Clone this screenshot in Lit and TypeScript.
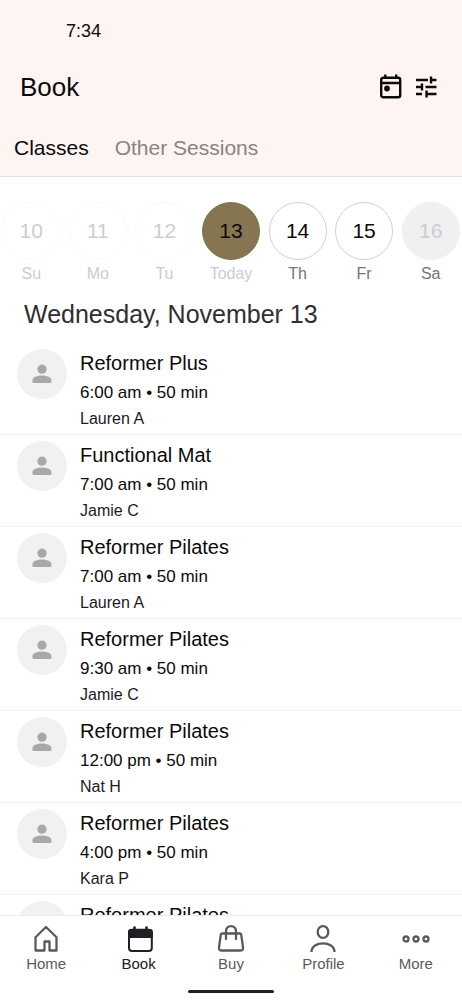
import { LitElement, html, css, svg, nothing } from "lit";
import { customElement, state } from "lit/decorators.js";
import { classMap } from "lit/directives/class-map.js";

interface Day {
  date: number;
  label: string;
  kind: "past" | "today" | "open" | "closed";
}

interface Session {
  name: string;
  time?: string;
  teacher?: string;
}

const DAYS: Day[] = [
  { date: 10, label: "Su", kind: "past" },
  { date: 11, label: "Mo", kind: "past" },
  { date: 12, label: "Tu", kind: "past" },
  { date: 13, label: "Today", kind: "today" },
  { date: 14, label: "Th", kind: "open" },
  { date: 15, label: "Fr", kind: "open" },
  { date: 16, label: "Sa", kind: "closed" },
];

const SESSIONS: Session[] = [
  { name: "Reformer Plus", time: "6:00 am • 50 min", teacher: "Lauren A" },
  { name: "Functional Mat", time: "7:00 am • 50 min", teacher: "Jamie C" },
  { name: "Reformer Pilates", time: "7:00 am • 50 min", teacher: "Lauren A" },
  { name: "Reformer Pilates", time: "9:30 am • 50 min", teacher: "Jamie C" },
  { name: "Reformer Pilates", time: "12:00 pm • 50 min", teacher: "Nat H" },
  { name: "Reformer Pilates", time: "4:00 pm • 50 min", teacher: "Kara P" },
  { name: "Reformer Pilates" },
];

const NAV = [
  {
    label: "Home",
    icon: svg`<path d="M4.500 13.200 15 3l10.500 10.200V26.500h-7V17.500h-5v9h-9z" fill="none" stroke="currentColor" stroke-width="2.300" stroke-linejoin="round"/>`,
  },
  {
    label: "Book",
    icon: svg`<rect x="5" y="5.800" width="22.800" height="21.200" rx="3" fill="none" stroke="currentColor" stroke-width="2"/><path d="M4 14V8a3 3 0 0 1 3-3h18.800a3 3 0 0 1 3 3v6z" fill="currentColor"/><path d="M10.500 2.500V7M22.500 2.500V7" stroke="currentColor" stroke-width="2.600"/>`,
  },
  {
    label: "Buy",
    icon: svg`<path d="M6.200 9.500h17.600q1.200 0 1.400 1.200l1.800 12.600q.4 3.200-2.700 3.200H5.700q-3.100 0-2.700-3.200l1.800-12.600q.2-1.200 1.400-1.200zM10 15V7.500C10 .3 20 .3 20 7.500V15" fill="none" stroke="currentColor" stroke-width="2.300" stroke-linecap="round"/>`,
  },
  {
    label: "Profile",
    icon: svg`<ellipse cx="15" cy="8" rx="5.300" ry="5.900" fill="none" stroke="currentColor" stroke-width="2.300"/><path d="M3.500 28c0-11.500 23-11.500 23 0" fill="none" stroke="currentColor" stroke-width="2.300"/>`,
  },
  {
    label: "More",
    icon: svg`<g fill="none" stroke="currentColor" stroke-width="2.300"><circle cx="5" cy="15" r="2.500"/><circle cx="15" cy="15" r="2.500"/><circle cx="25" cy="15" r="2.500"/></g>`,
  },
];

@customElement("app-root")
export class AppRoot extends LitElement {
  @state() private tab = "Classes";

  static styles = css`
    :host {
      display: flex;
      flex-direction: column;
      height: 100vh;
      overflow: hidden;
      background: #fff;
      color: #0c0a0b;
      font-family: "Liberation Sans", Arial, sans-serif;
    }
    * {
      box-sizing: border-box;
    }
    button {
      padding: 0;
      border: 0;
      background: none;
      color: inherit;
      font: inherit;
      cursor: pointer;
    }
    h1,
    h2,
    h3,
    p,
    ul {
      margin: 0;
      padding: 0;
      font-weight: 400;
    }
    ul {
      list-style: none;
    }
    svg {
      display: block;
    }
    .header {
      flex: none;
      background: #fef4f2;
      border-bottom: 1px solid #e5dfde;
    }
    .status {
      padding: 20px 66px 0;
      font-size: 18px;
      line-height: 22px;
    }
    .title-bar {
      display: flex;
      align-items: center;
      justify-content: space-between;
      padding: 29px 22px 0 20px;
    }
    .title {
      font-size: 26px;
      line-height: 32px;
    }
    .actions {
      display: flex;
      gap: 8px;
    }
    .tabs {
      display: flex;
      gap: 26px;
      padding: 32px 14px 15px;
      font-size: 21px;
      line-height: 26px;
    }
    .tab {
      color: #8a8382;
    }
    .tab.active {
      color: #0c0a0b;
    }
    .days {
      flex: none;
      display: grid;
      grid-template-columns: repeat(7, 1fr);
      margin: 25px -2px 0;
    }
    .day {
      display: flex;
      flex-direction: column;
      align-items: center;
      gap: 4px;
      color: #77717a;
      font-size: 16px;
      line-height: 20px;
    }
    .circle {
      width: 58px;
      height: 58px;
      border: 1px solid #d2d0d4;
      border-radius: 50%;
      color: #0c0a0b;
      font-size: 21px;
      line-height: 56px;
      text-align: center;
    }
    .past,
    .today {
      color: #cfcbd2;
    }
    .past .circle {
      border-color: #fafafa;
      color: #cfcbd2;
    }
    .today .circle {
      border-color: #867551;
      background: #867551;
    }
    .closed .circle {
      border-color: #f1eff2;
      background: #f1eff2;
      color: #cfcbd2;
    }
    .date {
      flex: none;
      padding: 14px 24px 13px;
      color: #302e31;
      font-size: 25px;
      line-height: 32px;
    }
    .sessions {
      flex: 1;
      min-height: 0;
      overflow: hidden;
    }
    .session {
      display: flex;
      gap: 13px;
      height: 92px;
      padding: 6px 17px 0;
      border-bottom: 1px solid #efeef0;
    }
    .avatar {
      flex: none;
      display: grid;
      place-items: center;
      width: 50px;
      height: 50px;
      border-radius: 50%;
      background: #f2f0f3;
      color: #a9a7aa;
    }
    .name {
      font-size: 20px;
      line-height: 28px;
    }
    .time {
      padding-top: 4px;
      font-size: 17px;
      line-height: 24px;
    }
    .teacher {
      padding-top: 2px;
      font-size: 16px;
      line-height: 24px;
      color: #1c1b1d;
    }
    .nav {
      flex: none;
      display: grid;
      grid-template-columns: repeat(5, 1fr);
      border-top: 1px solid #ececee;
      padding-top: 8px;
      background: #fff;
    }
    .link {
      display: flex;
      flex-direction: column;
      align-items: center;
      color: #5a5a5c;
      font-size: 15px;
      line-height: 20px;
      text-decoration: none;
    }
    .link.current {
      color: #202024;
    }
    .home-bar {
      flex: none;
      align-self: center;
      width: 86px;
      height: 3px;
      margin: 16px 0 7px;
      border-radius: 2px;
      background: #202024;
    }
  `;

  private renderTab(name: string) {
    const active = this.tab === name;
    return html`<button
      class=${classMap({ tab: true, active })}
      role="tab"
      aria-selected=${active}
      @click=${() => (this.tab = name)}
    >${name}</button>`;
  }

  render() {
    return html`
      <header class="header">
        <div class="status">7:34</div>
        <div class="title-bar">
          <h1 class="title">Book</h1>
          <div class="actions">
            <button aria-label="Calendar">
              <svg width="27" height="28" viewBox="0 0 27 28" fill="none" stroke="currentColor" stroke-width="2.400">
                <rect x="3.200" y="4.700" width="19" height="19.500" rx="2" />
                <path d="M3.200 10h19M7.300 1.500V5M18.200 1.500V5" />
                <circle cx="9" cy="15.500" r="2.900" fill="currentColor" stroke="none" />
              </svg>
            </button>
            <button aria-label="Filters">
              <svg width="27" height="28" viewBox="0 0 27 28" fill="none" stroke="currentColor" stroke-width="2.400">
                <path d="M3 7h12M18 7h5.500M18 3.500v7M3 14h6M12.500 14h11M9 10.500v7M3 21h6M13.500 21h10M13.500 17.500v7" />
              </svg>
            </button>
          </div>
        </div>
        <div class="tabs" role="tablist">
          ${this.renderTab("Classes")} ${this.renderTab("Other Sessions")}
        </div>
      </header>
      <div class="days">
        ${DAYS.map(
          (d) => html`<button class="day ${d.kind}">
            <span class="circle">${d.date}</span>
            <span>${d.label}</span>
          </button>`
        )}
      </div>
      <h2 class="date">Wednesday, November 13</h2>
      <ul class="sessions">
        ${SESSIONS.map(
          (s) => html`<li class="session">
            <span class="avatar">
              <svg width="20" height="20" viewBox="0 0 20 20" fill="currentColor">
                <circle cx="10" cy="5.200" r="4.600" />
                <path d="M.5 17.500v-1.500C.5 13 5.500 11.500 10 11.500s9.500 1.500 9.500 4.500v1.500q0 1.500-1.500 1.500H2q-1.500 0-1.500-1.500z" />
              </svg>
            </span>
            <div>
              <h3 class="name">${s.name}</h3>
              ${s.time ? html`<p class="time">${s.time}</p>` : nothing}
              ${s.teacher ? html`<p class="teacher">${s.teacher}</p>` : nothing}
            </div>
          </li>`
        )}
      </ul>
      <nav class="nav">
        ${NAV.map(
          (n) => html`<a
            href="#${n.label.toLowerCase()}"
            class=${classMap({ link: true, current: n.label === "Book" })}
          >
            <svg width="30" height="30" viewBox="0 0 30 30">${n.icon}</svg>
            <span>${n.label}</span>
          </a>`
        )}
      </nav>
      <div class="home-bar"></div>
    `;
  }
}
